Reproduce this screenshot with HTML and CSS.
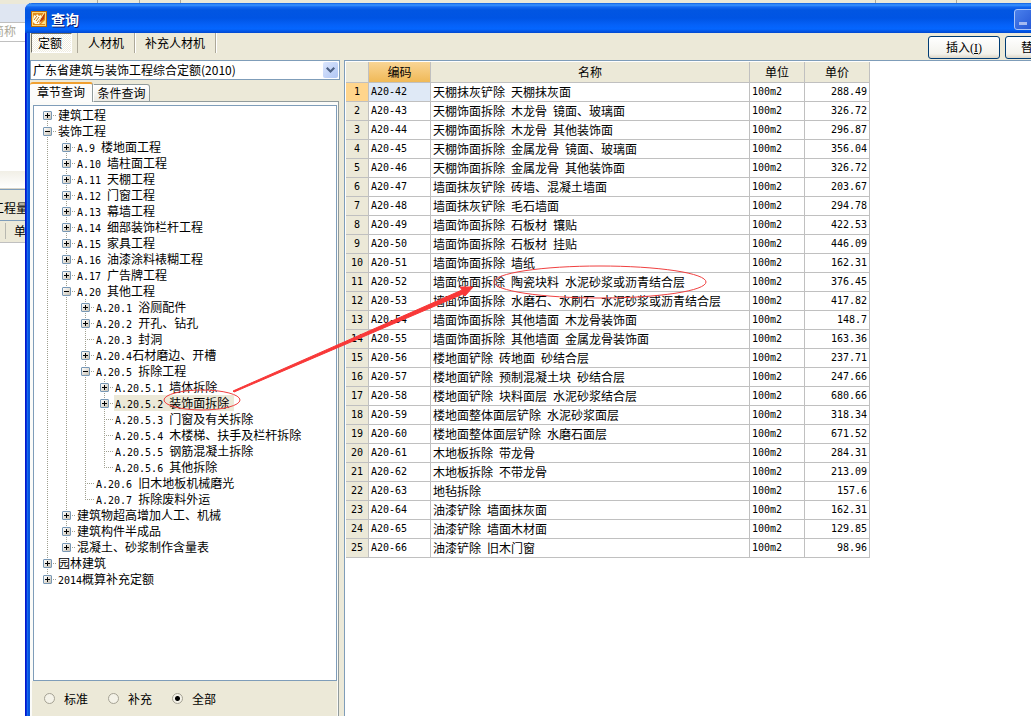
FILE: index.html
```html
<!DOCTYPE html>
<html lang="zh-CN">
<head>
<meta charset="utf-8">
<title>查询</title>
<link rel="stylesheet" href="styles.css">
</head>
<body>
<div class="backdrop" aria-hidden="true">
  <div class="bg-strip"></div>
  <div class="bg-blue"></div>
  <div class="bg-field"><span>简称</span></div>
  <div class="bg-blank"></div>
  <div class="bg-fade"></div>
  <div class="bg-tab"><span>工程量</span></div>
  <div class="bg-head"><span>单位</span></div>
</div>

<main class="dialog">
  <header class="titlebar">
    <svg class="app-icon" viewBox="0 0 16 16" width="16" height="16" aria-hidden="true">
      <rect width="16" height="16" fill="#b8690c"/>
      <rect x="1" y="1" width="14" height="14" fill="#ffd873"/>
      <rect x="2" y="2" width="12" height="12" fill="#e08a1c"/>
      <path d="M2 8l1-4 2 1 1-2 2 2 2-1 1 3-1 4-2 2H4l-2-2z" fill="#fffbe8"/>
      <path d="M3 9l3-4M5 10l3-4M6 12l4-5" stroke="#c87a14" stroke-width="1" fill="none"/>
      <path d="M14 2l-4 5-2 5 5-4z" fill="#c03c08"/>
      <path d="M13 2l-5 8" stroke="#ffe9a0" fill="none"/>
      <path d="M10 13h4v-4z" fill="#ffe08a"/>
    </svg>
    <h1>查询</h1>
    <button class="win-btn" type="button" aria-label="最小化"><span class="min-glyph"></span></button>
    <button class="win-btn" type="button" aria-label="最大化"></button>
    <button class="win-btn" type="button" aria-label="关闭"></button>
  </header>

  <div class="toolbar">
    <nav class="modes">
      <button class="mode mode-on" type="button">定额</button>
      <button class="mode" type="button">人材机</button>
      <button class="mode" type="button">补充人材机</button>
    </nav>
    <div class="actions">
      <button class="action" type="button">插入<span class="key">(<u>I</u>)</span></button>
      <button class="action" type="button">替换<span class="key">(<u>R</u>)</span></button>
    </div>
  </div>

  <div class="content">
    <section class="side">
      <div class="combo">
        <select aria-label="定额库"><option>广东省建筑与装饰工程综合定额(2010)</option></select>
        <span class="combo-arrow"><svg viewBox="0 0 9 7" width="9" height="7"><path d="M0 1.5L1.5 0 4.500 3 7.500 0 9 1.500 4.500 6z" fill="#4d6185"/></svg></span>
      </div>
      <div class="tabs">
        <button class="tab tab-on" type="button">章节查询</button>
        <button class="tab" type="button">条件查询</button>
      </div>
      <div class="tab-panel">
        <div class="tree-box">
          <ul class="tree">
            <li><div class="node"><button class="tg plus" type="button" aria-label="展开"></button><span class="label">建筑工程</span></div></li>
            <li><div class="node"><button class="tg" type="button" aria-label="折叠"></button><span class="label">装饰工程</span></div>
              <ul>
                <li><div class="node"><button class="tg plus" type="button" aria-label="展开"></button><span class="label"><span class="n">A.9 </span>楼地面工程</span></div></li>
                <li><div class="node"><button class="tg plus" type="button" aria-label="展开"></button><span class="label"><span class="n">A.10 </span>墙柱面工程</span></div></li>
                <li><div class="node"><button class="tg plus" type="button" aria-label="展开"></button><span class="label"><span class="n">A.11 </span>天棚工程</span></div></li>
                <li><div class="node"><button class="tg plus" type="button" aria-label="展开"></button><span class="label"><span class="n">A.12 </span>门窗工程</span></div></li>
                <li><div class="node"><button class="tg plus" type="button" aria-label="展开"></button><span class="label"><span class="n">A.13 </span>幕墙工程</span></div></li>
                <li><div class="node"><button class="tg plus" type="button" aria-label="展开"></button><span class="label"><span class="n">A.14 </span>细部装饰栏杆工程</span></div></li>
                <li><div class="node"><button class="tg plus" type="button" aria-label="展开"></button><span class="label"><span class="n">A.15 </span>家具工程</span></div></li>
                <li><div class="node"><button class="tg plus" type="button" aria-label="展开"></button><span class="label"><span class="n">A.16 </span>油漆涂料裱糊工程</span></div></li>
                <li><div class="node"><button class="tg plus" type="button" aria-label="展开"></button><span class="label"><span class="n">A.17 </span>广告牌工程</span></div></li>
                <li><div class="node"><button class="tg" type="button" aria-label="折叠"></button><span class="label"><span class="n">A.20 </span>其他工程</span></div>
                  <ul>
                    <li><div class="node"><button class="tg plus" type="button" aria-label="展开"></button><span class="label"><span class="n">A.20.1 </span>浴厕配件</span></div></li>
                    <li><div class="node"><button class="tg plus" type="button" aria-label="展开"></button><span class="label"><span class="n">A.20.2 </span>开孔、钻孔</span></div></li>
                    <li><div class="node leaf"><span class="label"><span class="n">A.20.3 </span>封洞</span></div></li>
                    <li><div class="node"><button class="tg plus" type="button" aria-label="展开"></button><span class="label"><span class="n">A.20.4</span>石材磨边、开槽</span></div></li>
                    <li><div class="node"><button class="tg" type="button" aria-label="折叠"></button><span class="label"><span class="n">A.20.5 </span>拆除工程</span></div>
                      <ul>
                        <li><div class="node"><button class="tg plus" type="button" aria-label="展开"></button><span class="label"><span class="n">A.20.5.1 </span>墙体拆除</span></div></li>
                        <li><div class="node"><button class="tg plus" type="button" aria-label="展开"></button><span class="label picked"><span class="n">A.20.5.2 </span>装饰面拆除</span></div></li>
                        <li><div class="node leaf"><span class="label"><span class="n">A.20.5.3 </span>门窗及有关拆除</span></div></li>
                        <li><div class="node leaf"><span class="label"><span class="n">A.20.5.4 </span>木楼梯、扶手及栏杆拆除</span></div></li>
                        <li><div class="node leaf"><span class="label"><span class="n">A.20.5.5 </span>钢筋混凝土拆除</span></div></li>
                        <li><div class="node leaf"><span class="label"><span class="n">A.20.5.6 </span>其他拆除</span></div></li>
                      </ul>
                    </li>
                    <li><div class="node leaf"><span class="label"><span class="n">A.20.6 </span>旧木地板机械磨光</span></div></li>
                    <li><div class="node leaf"><span class="label"><span class="n">A.20.7 </span>拆除废料外运</span></div></li>
                  </ul>
                </li>
                <li><div class="node"><button class="tg plus" type="button" aria-label="展开"></button><span class="label">建筑物超高增加人工、机械</span></div></li>
                <li><div class="node"><button class="tg plus" type="button" aria-label="展开"></button><span class="label">建筑构件半成品</span></div></li>
                <li><div class="node"><button class="tg plus" type="button" aria-label="展开"></button><span class="label">混凝土、砂浆制作含量表</span></div></li>
              </ul>
            </li>
            <li><div class="node"><button class="tg plus" type="button" aria-label="展开"></button><span class="label">园林建筑</span></div></li>
            <li><div class="node"><button class="tg plus" type="button" aria-label="展开"></button><span class="label"><span class="n">2014</span>概算补充定额</span></div></li>
          </ul>
        </div>
        <div class="scope">
          <label><input type="radio" name="scope">标准</label>
          <label><input type="radio" name="scope">补充</label>
          <label><input type="radio" name="scope" checked>全部</label>
        </div>
      </div>
    </section>

    <section class="grid-pane">
      <table class="grid">
        <colgroup><col class="c-no"><col class="c-code"><col class="c-name"><col class="c-unit"><col class="c-price"></colgroup>
        <thead><tr><th></th><th class="sorted">编码</th><th>名称</th><th>单位</th><th>单价</th></tr></thead>
        <tbody>
          <tr class="current"><th>1</th><td>A20-42</td><td>天棚抹灰铲除&ensp;天棚抹灰面</td><td>100m2</td><td>288.49</td></tr>
          <tr><th>2</th><td>A20-43</td><td>天棚饰面拆除&ensp;木龙骨&ensp;镜面、玻璃面</td><td>100m2</td><td>326.72</td></tr>
          <tr><th>3</th><td>A20-44</td><td>天棚饰面拆除&ensp;木龙骨&ensp;其他装饰面</td><td>100m2</td><td>296.87</td></tr>
          <tr><th>4</th><td>A20-45</td><td>天棚饰面拆除&ensp;金属龙骨&ensp;镜面、玻璃面</td><td>100m2</td><td>356.04</td></tr>
          <tr><th>5</th><td>A20-46</td><td>天棚饰面拆除&ensp;金属龙骨&ensp;其他装饰面</td><td>100m2</td><td>326.72</td></tr>
          <tr><th>6</th><td>A20-47</td><td>墙面抹灰铲除&ensp;砖墙、混凝土墙面</td><td>100m2</td><td>203.67</td></tr>
          <tr><th>7</th><td>A20-48</td><td>墙面抹灰铲除&ensp;毛石墙面</td><td>100m2</td><td>294.78</td></tr>
          <tr><th>8</th><td>A20-49</td><td>墙面饰面拆除&ensp;石板材&ensp;镶贴</td><td>100m2</td><td>422.53</td></tr>
          <tr><th>9</th><td>A20-50</td><td>墙面饰面拆除&ensp;石板材&ensp;挂贴</td><td>100m2</td><td>446.09</td></tr>
          <tr><th>10</th><td>A20-51</td><td>墙面饰面拆除&ensp;墙纸</td><td>100m2</td><td>162.31</td></tr>
          <tr><th>11</th><td>A20-52</td><td>墙面饰面拆除&ensp;陶瓷块料&ensp;水泥砂浆或沥青结合层</td><td>100m2</td><td>376.45</td></tr>
          <tr><th>12</th><td>A20-53</td><td>墙面饰面拆除&ensp;水磨石、水刷石&ensp;水泥砂浆或沥青结合层</td><td>100m2</td><td>417.82</td></tr>
          <tr><th>13</th><td>A20-54</td><td>墙面饰面拆除&ensp;其他墙面&ensp;木龙骨装饰面</td><td>100m2</td><td>148.7</td></tr>
          <tr><th>14</th><td>A20-55</td><td>墙面饰面拆除&ensp;其他墙面&ensp;金属龙骨装饰面</td><td>100m2</td><td>163.36</td></tr>
          <tr><th>15</th><td>A20-56</td><td>楼地面铲除&ensp;砖地面&ensp;砂结合层</td><td>100m2</td><td>237.71</td></tr>
          <tr><th>16</th><td>A20-57</td><td>楼地面铲除&ensp;预制混凝土块&ensp;砂结合层</td><td>100m2</td><td>247.66</td></tr>
          <tr><th>17</th><td>A20-58</td><td>楼地面铲除&ensp;块料面层&ensp;水泥砂浆结合层</td><td>100m2</td><td>680.66</td></tr>
          <tr><th>18</th><td>A20-59</td><td>楼地面整体面层铲除&ensp;水泥砂浆面层</td><td>100m2</td><td>318.34</td></tr>
          <tr><th>19</th><td>A20-60</td><td>楼地面整体面层铲除&ensp;水磨石面层</td><td>100m2</td><td>671.52</td></tr>
          <tr><th>20</th><td>A20-61</td><td>木地板拆除&ensp;带龙骨</td><td>100m2</td><td>284.31</td></tr>
          <tr><th>21</th><td>A20-62</td><td>木地板拆除&ensp;不带龙骨</td><td>100m2</td><td>213.09</td></tr>
          <tr><th>22</th><td>A20-63</td><td>地毡拆除</td><td>100m2</td><td>157.6</td></tr>
          <tr><th>23</th><td>A20-64</td><td>油漆铲除&ensp;墙面抹灰面</td><td>100m2</td><td>162.31</td></tr>
          <tr><th>24</th><td>A20-65</td><td>油漆铲除&ensp;墙面木材面</td><td>100m2</td><td>129.85</td></tr>
          <tr><th>25</th><td>A20-66</td><td>油漆铲除&ensp;旧木门窗</td><td>100m2</td><td>98.96</td></tr>
        </tbody>
      </table>
    </section>
  </div>
</main>

<svg class="marks" width="720" height="420" viewBox="0 0 720 420" aria-hidden="true">
  <ellipse cx="202" cy="400" rx="38" ry="10"/>
  <ellipse cx="600" cy="282" rx="106" ry="16"/>
  <path d="M233 391L462 290L460 287L473 287L465 296L463 294L234 392z"/>
</svg>
</body>
</html>
```

FILE: styles.css
```css
* { box-sizing: border-box; }

html, body { height: 100%; }

body {
  margin: 0;
  position: relative;
  overflow: hidden;
  background: #fff;
  color: #000;
  font: 12px/16px "Noto Sans CJK SC", sans-serif;
}

button, select, input { font: inherit; color: inherit; margin: 0; }
button { padding: 0; border: 0; background: none; }
ul { margin: 0; padding: 0; list-style: none; }

.n { font: 10px/16px "DejaVu Sans Mono", monospace; white-space: pre; }

/* window behind the dialog */
.backdrop { display: flex; flex-direction: column; white-space: nowrap; }
.bg-strip {
  height: 4px;
  background: linear-gradient(90deg, #ece9d8 0 97px, #aca899 97px 98px, #ece9d8 98px 139px, #aca899 139px 140px, #ece9d8 140px 180px, #aca899 180px 181px, #ece9d8 181px 875px, #aca899 875px 876px, #ece9d8 876px 956px, #aca899 956px 957px, #ece9d8 957px);
}
.bg-blue { height: 19px; background: #dfe6f2; border-bottom: 1px solid #c0c0c0; }
.bg-field { height: 19px; color: #aca899; border-bottom: 1px solid #c0c0c0; }
.bg-field span { margin-left: -8px; }
.bg-blank { height: 129px; }
.bg-fade { height: 18px; background: linear-gradient(#f1efe6, #fff); border-bottom: 1px solid #d8d4c8; }
.bg-tab { height: 32px; padding-top: 10px; background: #ece9d8; border-top: 1px solid #7f9db9; border-bottom: 1px solid #7f9db9; }
.bg-tab span { margin-left: -8px; }
.bg-head { height: 22px; padding: 2px 0 0 5px; background: #ece9d8; border-bottom: 1px solid #c0c0c0; }
.bg-head span { display: inline-block; padding-left: 8px; border-left: 1px solid #b8b8b0; }

/* dialog window, runs past the right edge of the screen */
.dialog {
  position: absolute;
  top: 3px;
  left: 25px;
  right: -60px;
  bottom: 0;
  display: flex;
  flex-direction: column;
  overflow: hidden;
  padding-left: 5px;
  border-radius: 7px 0 0 0;
  background: linear-gradient(90deg, #0019cf 0 1px, #0831d9 1px 2px, #166aee 2px 3px, #0855dd 3px 5px, #ece9d8 5px);
}

.titlebar {
  flex: none;
  height: 30px;
  display: flex;
  align-items: center;
  gap: 2px;
  margin-left: -5px;
  padding: 2px 10px 0 6px;
  background: linear-gradient(#0f5fe0 0, #3c95ff 2px, #1468f0 4px, #0256e2 7px, #0054e3 15px, #0561f8 22px, #0466ff 26px, #0148d0 30px);
}
.titlebar h1 { flex: 1; margin: 0 0 0 2px; font-size: 14px; font-weight: 700; line-height: 18px; color: #fff; text-shadow: 1px 1px #0b1e72; }
.win-btn {
  width: 21px; height: 21px;
  display: flex; align-items: flex-end;
  padding: 4px;
  border: 1px solid #a9c4f8;
  border-radius: 3px;
  background: linear-gradient(135deg, #4a80ec, #2355d4);
}
.min-glyph { width: 8px; height: 3px; background: #a5b9f0; }

.toolbar { flex: none; height: 27px; display: flex; justify-content: space-between; padding-right: 14px; }
.modes { display: flex; align-items: flex-start; padding-left: 1px; }
.mode { height: 20px; padding: 0 10px; border-right: 1px solid #aca899; box-shadow: 1px 0 #fff; }
.mode-on {
  margin-right: 6px;
  padding: 0 9px 0 6px;
  border: 1px solid #fff;
  border-top-color: #716f64;
  border-left-color: #716f64;
  background: repeating-conic-gradient(#fff 0 25%, #efecdf 0 50%) 0 0 / 2px 2px;
  box-shadow: 5px 0 #ece9d8, 6px 0 #aca899;
}
.actions { display: flex; gap: 5px; padding-top: 3px; }
.action {
  width: 72px; height: 23px;
  border: 1px solid #003c74;
  border-radius: 3px;
  background: linear-gradient(#fff, #f3f2ec 80%, #dcd6c8);
}
.key { font: 12px/16px "Liberation Serif", serif; }

.content { flex: 1; min-height: 0; display: grid; grid-template-columns: 310px 1fr; column-gap: 4px; }

.side { display: flex; flex-direction: column; min-height: 0; }
.combo { position: relative; height: 20px; }
.combo select {
  width: 100%; height: 20px;
  padding: 0 20px 0 2px;
  border: 1px solid #7f9db9;
  border-radius: 0;
  background: #fff;
  appearance: none;
}
.combo-arrow {
  position: absolute; top: 2px; right: 2px;
  width: 15px; height: 16px;
  display: grid; place-items: center;
  border-radius: 2px;
  background: linear-gradient(135deg, #dbe6fd, #b0c6f4);
  pointer-events: none;
}

.tabs { display: flex; align-items: flex-end; height: 22px; padding-top: 2px; background: linear-gradient(#919b9c, #919b9c) 62px 100% / 247px 1px no-repeat; }
.tab { height: 18px; width: 57px; border: 1px solid #919b9c; border-left-color: #fff; border-radius: 0 3px 0 0; background: linear-gradient(#fff, #ecebe5); white-space: nowrap; }
.tab-on { height: 20px; width: 63px; padding-bottom: 2px; border: 0; border-top: 2px solid #f0a030; border-right: 1px solid #919b9c; border-radius: 3px 3px 0 0; background: #fcfcfb; }
.tab-panel {
  flex: 1; min-height: 0;
  display: flex; flex-direction: column;
  width: 309px;
  padding: 3px 1px 0 3px;
  border-right: 1px solid #919b9c;
  background: #fbfbf8;
}
.tree-box { flex: 1; min-height: 0; overflow: hidden; padding: 1px 0 0 9px; border: 1px solid #7f9db9; background: #fff; }

.tree li { position: relative; }
.tree li::before {
  content: "";
  position: absolute; top: 0; bottom: 0; left: 4px;
  width: 1px;
  background: repeating-linear-gradient(#a0a090 0 1px, transparent 1px 2px);
}
.tree li:last-child::before { bottom: auto; height: 8px; }
.tree > li:first-child::before { top: 8px; }
.tree ul { margin-left: 19px; }
.node {
  position: relative;
  display: flex; align-items: center;
  height: 16px;
  background: repeating-linear-gradient(90deg, #a0a090 0 1px, transparent 1px 2px) 4px 8px / 9px 1px no-repeat;
}
.tg {
  width: 9px; height: 9px;
  border: 1px solid #7898b5;
  border-radius: 1px;
  background:
    linear-gradient(#000, #000) 50% 50% / 5px 1px no-repeat,
    linear-gradient(135deg, #fff, #c9c2b3);
}
.plus {
  background:
    linear-gradient(#000, #000) 50% 50% / 5px 1px no-repeat,
    linear-gradient(#000, #000) 50% 50% / 1px 5px no-repeat,
    linear-gradient(135deg, #fff, #c9c2b3);
}
.label { height: 16px; margin-left: 5px; padding: 0 5px 0 1px; white-space: nowrap; line-height: 16px; }
.leaf .label { margin-left: 14px; }
.picked { background: #ece9d8; }

.scope { flex: none; height: 35px; display: flex; align-items: center; gap: 20px; margin-left: -1px; padding-left: 12px; background: #ece9d8; }
.scope label { display: flex; align-items: center; gap: 9px; white-space: nowrap; }
.scope input { flex: none; appearance: none; width: 11px; height: 11px; border: 1px solid #a5a294; border-radius: 50%; background: #f4f2e8; }
.scope input:checked { background: radial-gradient(circle, #000 0 2px, #f4f2e8 3px); }

.grid-pane { min-width: 0; padding: 1px 0 0 1px; border-top: 1px solid #7f9db9; border-left: 1px solid #7f9db9; background: #fff; }
.grid { table-layout: fixed; width: 524px; border-collapse: separate; border-spacing: 0; }
.c-no { width: 23px; }
.c-code { width: 62px; }
.c-name { width: 319px; }
.c-unit { width: 55px; }
.c-price { width: 65px; }
.grid th, .grid td {
  height: 19px;
  padding: 0 2px;
  border-right: 1px solid #c0c0c0;
  border-bottom: 1px solid #c0c0c0;
  font-weight: 400;
  line-height: 16px;
  text-align: left;
  white-space: nowrap;
}
.grid th { background: #ece9d8; text-align: center; }
.grid thead th { height: 21px; }
.grid .sorted { background: linear-gradient(#f9d595, #f0b957); }
.grid tbody th, .grid td:nth-child(2), .grid td:nth-child(4), .grid td:nth-child(5) { font: 10px/16px "DejaVu Sans Mono", monospace; }
.grid tbody th { padding: 0; }
.grid td:nth-child(5) { text-align: right; }
.grid .current th { background: #ffd58c; }
.grid .current td:nth-child(2) { background: #dfe9f6; }

/* red annotation marks drawn over the window */
.marks { position: absolute; top: 0; left: 0; pointer-events: none; }
.marks ellipse { fill: none; stroke: #f04040; stroke-width: 1; }
.marks path { fill: #f83838; stroke: #f83838; stroke-width: 1; }
```
